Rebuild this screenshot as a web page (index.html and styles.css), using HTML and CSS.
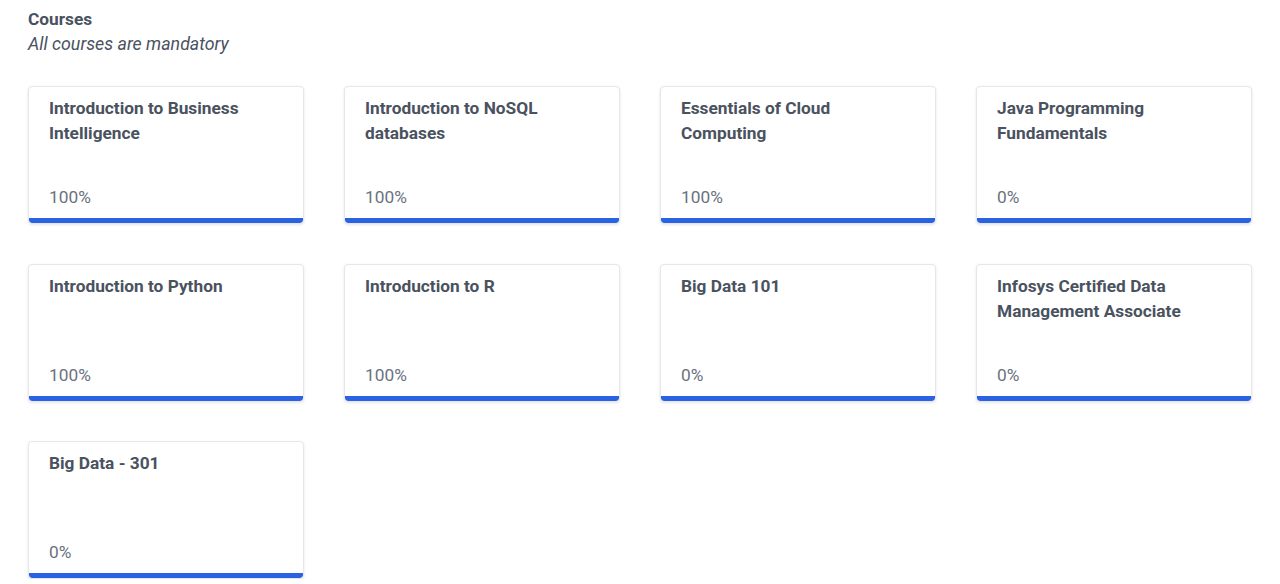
FILE: index.html
```html
<!DOCTYPE html>
<html lang="en">
<head>
<meta charset="utf-8">
<title>Courses</title>
<link rel="stylesheet" href="styles.css">
</head>
<body>
<section class="courses">
  <h2 class="heading">Courses</h2>
  <p class="subheading">All courses are mandatory</p>
  <div class="grid">
    <div class="card"><div class="card-title">Introduction to Business Intelligence</div><div class="card-pct">100%</div><div class="bar"></div></div>
    <div class="card"><div class="card-title">Introduction to NoSQL databases</div><div class="card-pct">100%</div><div class="bar"></div></div>
    <div class="card"><div class="card-title">Essentials of Cloud Computing</div><div class="card-pct">100%</div><div class="bar"></div></div>
    <div class="card"><div class="card-title">Java Programming Fundamentals</div><div class="card-pct">0%</div><div class="bar"></div></div>
    <div class="card"><div class="card-title">Introduction to Python</div><div class="card-pct">100%</div><div class="bar"></div></div>
    <div class="card"><div class="card-title">Introduction to R</div><div class="card-pct">100%</div><div class="bar"></div></div>
    <div class="card"><div class="card-title">Big Data 101</div><div class="card-pct">0%</div><div class="bar"></div></div>
    <div class="card"><div class="card-title">Infosys Certified Data Management Associate</div><div class="card-pct">0%</div><div class="bar"></div></div>
    <div class="card"><div class="card-title">Big Data - 301</div><div class="card-pct">0%</div><div class="bar"></div></div>
  </div>
</section>
</body>
</html>
```
FILE: styles.css
```css
html, body {
  margin: 0;
  padding: 0;
  background: #ffffff;
}
body {
  font-family: Roboto, "Liberation Sans", sans-serif;
  color: #4a5260;
}
.courses {
  padding: 7px 28px 0 28px;
}
.heading {
  margin: 0;
  font-size: 17.3px;
  font-weight: 700;
  line-height: 24px;
  color: #4a5260;
}
.subheading {
  margin: 0;
  font-size: 17.8px;
  font-style: italic;
  line-height: 25px;
  color: #4a5260;
}
.grid {
  margin-top: 30px;
  display: grid;
  grid-template-columns: repeat(4, 276px);
  column-gap: 40px;
  row-gap: 39.5px;
}
.card {
  height: 138px;
  box-sizing: border-box;
  border: 1px solid #e5e7eb;
  border-radius: 4px;
  box-shadow: 0 1px 3px rgba(0, 0, 0, 0.1);
  display: flex;
  flex-direction: column;
  overflow: hidden;
  background: #fff;
}
.card-title {
  padding: 9px 20px 0 20px;
  font-size: 17.3px;
  font-weight: 700;
  line-height: 25px;
  color: #4a5260;
  flex: 1;
}
.card-pct {
  padding: 0 20px;
  font-size: 17.3px;
  line-height: 24px;
  color: #6b7280;
  margin-bottom: 9px;
}
.bar {
  height: 5px;
  background: #2a62e4;
  border-radius: 0 0 3px 3px;
}
```
